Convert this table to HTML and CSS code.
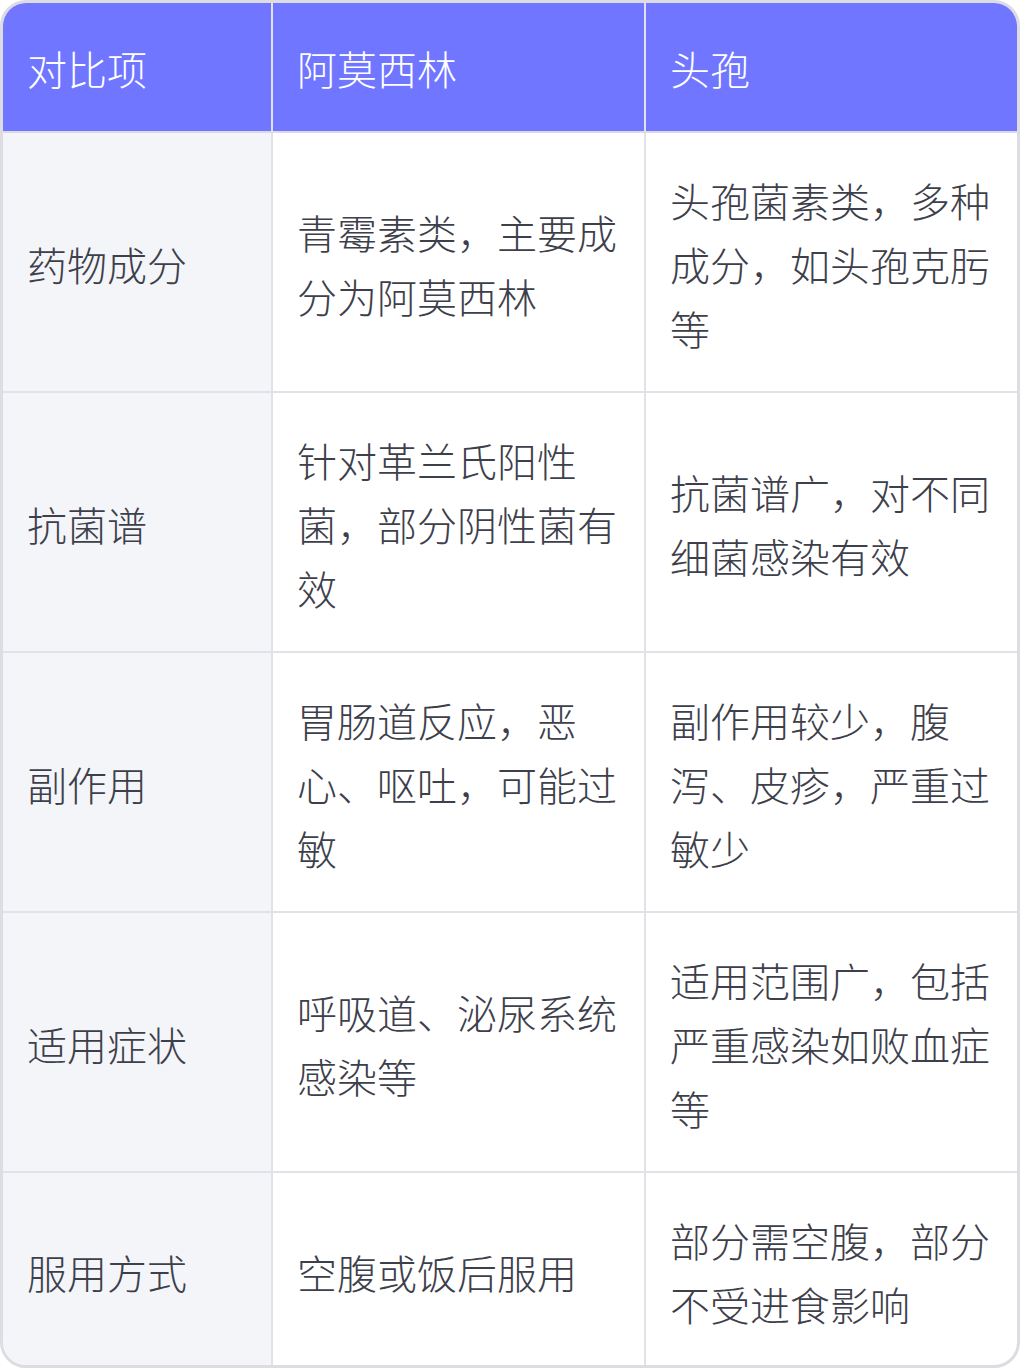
FILE: index.html
```html
<!DOCTYPE html>
<html lang="zh-CN">
<head>
<meta charset="utf-8">
<link rel="stylesheet" href="styles.css">
</head>
<body>
<div class="wrap">
<table class="cmp">
<colgroup><col class="c1"><col class="c2"><col class="c3"></colgroup>
<thead>
<tr><th>对比项</th><th>阿莫西林</th><th>头孢</th></tr>
</thead>
<tbody>
<tr><td>药物成分</td><td>青霉素类，主要成分为阿莫西林</td><td>头孢菌素类，多种成分，如头孢克肟等</td></tr>
<tr><td>抗菌谱</td><td>针对革兰氏阳性菌，部分阴性菌有效</td><td>抗菌谱广，对不同细菌感染有效</td></tr>
<tr><td>副作用</td><td>胃肠道反应，恶心、呕吐，可能过敏</td><td>副作用较少，腹泻、皮疹，严重过敏少</td></tr>
<tr><td>适用症状</td><td>呼吸道、泌尿系统感染等</td><td>适用范围广，包括严重感染如败血症等</td></tr>
<tr><td>服用方式</td><td>空腹或饭后服用</td><td>部分需空腹，部分不受进食影响</td></tr>
</tbody>
</table>
</div>
</body>
</html>
```
FILE: styles.css
```css
html, body {
  margin: 0;
  padding: 0;
  background: #ffffff;
}
.wrap {
  width: 1020px;
  height: 1368px;
  box-sizing: border-box;
  border: 3px solid #dcdce2;
  border-radius: 26px;
  overflow: hidden;
}
.cmp {
  width: 1014px;
  border-collapse: separate;
  border-spacing: 0;
  table-layout: fixed;
  font-family: "Noto Sans CJK SC", "Noto Sans", sans-serif;
  font-size: 40px;
  line-height: 64px;
  font-weight: 300;
  color: #3d404b;
}
.c1 { width: 270px; }
.c2 { width: 373px; }
.c3 { width: 371px; }
.cmp th,
.cmp td {
  text-align: left;
  font-weight: 300;
  vertical-align: middle;
  padding: 35px 24px 31px;
  border-right: 2px solid #e1e1e7;
  border-bottom: 2px solid #e1e1e7;
}
.cmp th {
  background: #7076ff;
  color: #ffffff;
  padding: 33px 24px 31px;
  border-bottom-color: #d9dae6;
}
.cmp tr > :last-child {
  border-right: none;
}
.cmp tbody tr:last-child td {
  border-bottom: none;
}
.cmp td:first-child {
  background: #f4f5f9;
}
```
